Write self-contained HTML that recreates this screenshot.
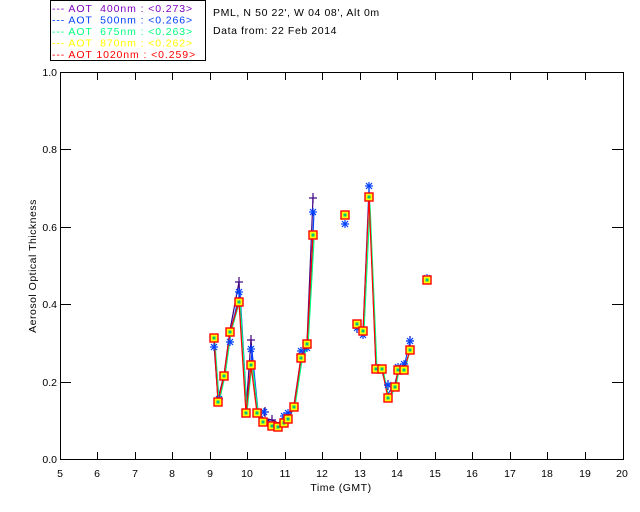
<!DOCTYPE html>
<html><head><meta charset="utf-8"><style>
html,body{margin:0;padding:0;background:#fff;}
svg{display:block;font-family:"Liberation Sans",sans-serif;}
</style></head><body>
<svg width="640" height="512" viewBox="0 0 640 512" xmlns="http://www.w3.org/2000/svg">
<defs>
<g id="sq"><rect x="-4" y="-4" width="8" height="8" fill="#ffff00" stroke="#ff0000" stroke-width="1.4"/><rect x="-1.5" y="-1.5" width="3" height="3" fill="#00c080"/></g>
<g id="ast" stroke="#0040ff" stroke-width="1.2"><line x1="-4" y1="0" x2="4" y2="0"/><line x1="0" y1="-4" x2="0" y2="4"/><line x1="-3" y1="-3" x2="3" y2="3"/><line x1="-3" y1="3" x2="3" y2="-3"/></g>
<g id="pl" stroke="#400080" stroke-width="1.2"><line x1="-4" y1="0" x2="4" y2="0"/><line x1="0" y1="-5" x2="0" y2="5"/></g>
</defs>
<rect x="50.5" y="0.5" width="155" height="60" fill="#fff" stroke="#000" stroke-width="1"/>
<g font-size="10.5" letter-spacing="0.9">
<text x="52" y="12" fill="#8000c0" xml:space="preserve">--- AOT  400nm : &lt;0.273&gt;</text>
<text x="52" y="23.5" fill="#0040ff" xml:space="preserve">--- AOT  500nm : &lt;0.266&gt;</text>
<text x="52" y="35" fill="#00ff80" xml:space="preserve">--- AOT  675nm : &lt;0.263&gt;</text>
<text x="52" y="46.5" fill="#ffff00" xml:space="preserve">--- AOT  870nm : &lt;0.262&gt;</text>
<text x="52" y="58" fill="#ff0000" xml:space="preserve">--- AOT 1020nm : &lt;0.259&gt;</text>
</g>
<text x="213" y="16" font-size="10.5" letter-spacing="0.6">PML, N 50 22', W 04 08', Alt 0m</text>
<text x="213" y="34" font-size="10.5" letter-spacing="0.6">Data from: 22 Feb 2014</text>
<rect x="60.5" y="72.5" width="563" height="387" fill="none" stroke="#000" stroke-width="1"/>
<g stroke="#000" stroke-width="1">
<path d="M97.5 460v-8M135.5 460v-8M172.5 460v-8M210.5 460v-8M247.5 460v-8M285.5 460v-8M322.5 460v-8M360.5 460v-8M397.5 460v-8M435.5 460v-8M472.5 460v-8M510.5 460v-8M547.5 460v-8M585.5 460v-8"/>
<path d="M97.5 72v8M135.5 72v8M172.5 72v8M210.5 72v8M247.5 72v8M285.5 72v8M322.5 72v8M360.5 72v8M397.5 72v8M435.5 72v8M472.5 72v8M510.5 72v8M547.5 72v8M585.5 72v8"/>
<path d="M60 382.5h11M60 304.5h11M60 227.5h11M60 149.5h11M623 382.5h-11M623 304.5h-11M623 227.5h-11M623 149.5h-11"/>
</g>
<g font-size="10.5" text-anchor="end">
<text x="57" y="76">1.0</text><text x="57" y="153">0.8</text><text x="57" y="231">0.6</text><text x="57" y="308">0.4</text><text x="57" y="386">0.2</text><text x="57" y="463">0.0</text>
</g>
<g font-size="10.5" text-anchor="middle">
<text x="60" y="477">5</text><text x="97" y="477">6</text><text x="135" y="477">7</text><text x="172" y="477">8</text><text x="210" y="477">9</text><text x="247" y="477">10</text><text x="285" y="477">11</text><text x="322" y="477">12</text><text x="360" y="477">13</text><text x="397" y="477">14</text><text x="435" y="477">15</text><text x="472" y="477">16</text><text x="510" y="477">17</text><text x="547" y="477">18</text><text x="585" y="477">19</text><text x="622" y="477">20</text>
<text x="341" y="491" letter-spacing="0.5">Time (GMT)</text>
<text transform="translate(36,266) rotate(-90)" letter-spacing="0.5">Aerosol Optical Thickness</text>
</g>
<g fill="none" stroke-width="1.2">
<polyline stroke="#400080" points="214,345 218,399 224,375 230,330 239,282 246,411 251,340 257,411 263,418 272,420 278,423 284,419 288,415 294,405 301,357 307,343 313,198"/>
<polyline stroke="#0040ff" points="215,347 219,399 225,375 231,330 240,292 247,411 252,351 258,411 264,419 273,423 279,425 285,421 289,417 295,405 302,358 308,343 314,212"/>
<polyline stroke="#00ff80" points="215,343 219,402 225,376 231,332 240,300 247,412 252,362 258,412 264,421 273,425 279,426 285,422 289,418 295,406 302,360 308,346 314,240"/>
<polyline stroke="#0040ff" points="357,326 363,333 369,188 376,369 382,371 388,394 395,383 398,372 404,367 410,341"/>
<polyline stroke="#00ff80" points="358,325 364,331 370,205 377,369 383,369 389,400 396,386 399,370 405,369 411,347"/>
<polyline stroke="#ff0000" points="214,338 218,402 224,376 230,332 239,302 246,413 251,365 257,413 263,422 272,426 278,427 284,423 288,419 294,407 301,358 307,344 313,235"/>
<polyline stroke="#ff0000" points="357,324 363,331 369,197 376,369 382,369 388,398 395,387 398,370 404,370 410,350"/>
</g>
<g>
<use href="#pl" x="239" y="282"/><use href="#pl" x="251" y="340"/><use href="#pl" x="313" y="198"/><use href="#pl" x="265" y="412"/><use href="#pl" x="272" y="420"/><use href="#pl" x="388" y="385"/><use href="#pl" x="410" y="341"/><use href="#pl" x="357" y="328"/>
<use href="#ast" x="214" y="347"/><use href="#ast" x="219" y="399"/><use href="#ast" x="230" y="342"/><use href="#ast" x="239" y="292"/><use href="#ast" x="251" y="349"/><use href="#ast" x="264" y="412"/><use href="#ast" x="284" y="416"/><use href="#ast" x="288" y="413"/><use href="#ast" x="301" y="351"/><use href="#ast" x="307" y="348"/><use href="#ast" x="313" y="212"/><use href="#ast" x="345" y="224"/><use href="#ast" x="369" y="186"/><use href="#ast" x="357" y="328"/><use href="#ast" x="363" y="335"/><use href="#ast" x="388" y="385"/><use href="#ast" x="398" y="367"/><use href="#ast" x="404" y="364"/><use href="#ast" x="410" y="341"/><use href="#ast" x="427" y="278"/>
<use href="#sq" x="214" y="338"/><use href="#sq" x="218" y="402"/><use href="#sq" x="224" y="376"/><use href="#sq" x="230" y="332"/><use href="#sq" x="239" y="302"/><use href="#sq" x="246" y="413"/><use href="#sq" x="251" y="365"/><use href="#sq" x="257" y="413"/><use href="#sq" x="263" y="422"/><use href="#sq" x="272" y="426"/><use href="#sq" x="278" y="427"/><use href="#sq" x="284" y="423"/><use href="#sq" x="288" y="419"/><use href="#sq" x="294" y="407"/><use href="#sq" x="301" y="358"/><use href="#sq" x="307" y="344"/><use href="#sq" x="313" y="235"/><use href="#sq" x="345" y="215"/><use href="#sq" x="357" y="324"/><use href="#sq" x="363" y="331"/><use href="#sq" x="369" y="197"/><use href="#sq" x="376" y="369"/><use href="#sq" x="382" y="369"/><use href="#sq" x="388" y="398"/><use href="#sq" x="395" y="387"/><use href="#sq" x="398" y="370"/><use href="#sq" x="404" y="370"/><use href="#sq" x="410" y="350"/><use href="#sq" x="427" y="280"/>
</g>
</svg>
</body></html>
